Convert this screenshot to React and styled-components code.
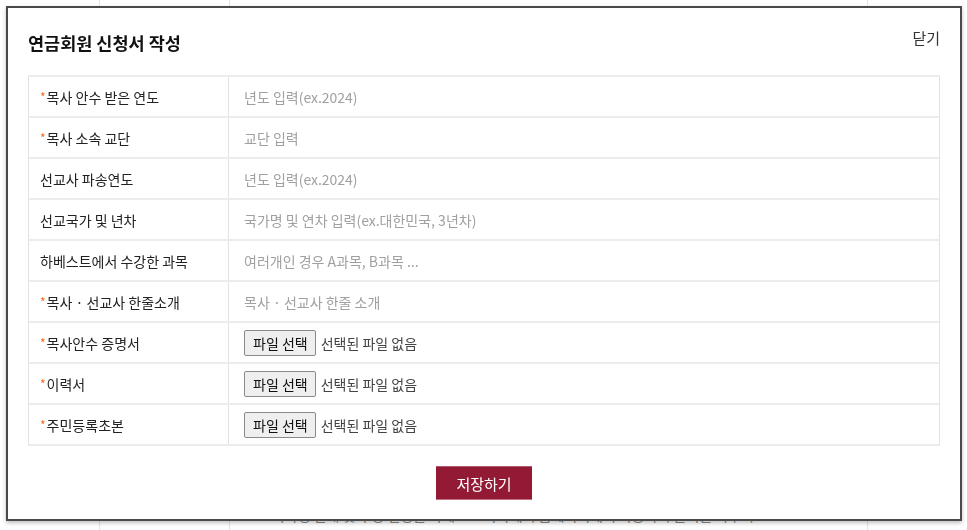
import React from "react";
import styled, { createGlobalStyle } from "styled-components";

const GlobalStyle = createGlobalStyle`
  html, body {
    margin: 0;
    padding: 0;
    background: #fff;
    font-family: "Noto Sans CJK KR", "Noto Sans", sans-serif;
    color: #222;
  }
  * { box-sizing: border-box; }
`;

const Page = styled.div`
  height: 530px;
  display: grid;
  grid-template-columns: 100px 130px 638px 1fr;
  overflow: hidden;
`;

const PageCol = styled.div`
  border-right: ${(p) => (p.$last ? "none" : "1px solid #e3e3e3")};
  display: flex;
  flex-direction: column;
  justify-content: flex-end;
  padding: 0 0 0 29px;
  font-size: 14px;
  color: #888;
  white-space: nowrap;
  overflow: hidden;
`;

const PageText = styled.div`
  line-height: 20px;
  margin-bottom: 5px;
`;

const Modal = styled.div`
  position: fixed;
  left: 6px;
  top: 6px;
  width: 956px;
  height: 515px;
  background: #fff;
  border: 2px solid #4a4a4a;
  box-shadow: 0 2px 4px rgba(0, 0, 0, 0.25);
  padding: 0 20px;
  display: flex;
  flex-direction: column;
`;

const Header = styled.div`
  display: flex;
  justify-content: space-between;
  align-items: flex-start;
  padding-top: 22px;
`;

const Title = styled.h2`
  margin: 0;
  font-size: 17.5px;
  line-height: 26px;
  font-weight: 700;
  color: #111;
`;

const Close = styled.button`
  border: none;
  background: none;
  padding: 0;
  margin-top: -3px;
  font-family: inherit;
  font-size: 15px;
  line-height: 22px;
  color: #333;
  cursor: pointer;
`;

const Table = styled.div`
  margin-top: 19px;
  border: 1px solid #e2e2e2;
  border-top: 2px solid #ececec;
  border-bottom: none;
`;

const Row = styled.div`
  display: grid;
  grid-template-columns: 200px 1fr;
  height: 41px;
  border-bottom: 2px solid #ececec;
`;

const Label = styled.div`
  display: flex;
  align-items: center;
  padding-left: 11px;
  border-right: 1px solid #e2e2e2;
  font-size: 14px;
  color: #222;
`;

const Star = styled.span`
  color: #f26b1d;
  font-size: 12px;
  margin-right: 1px;
`;

const Cell = styled.div`
  display: flex;
  align-items: center;
  padding-left: 15px;
`;

const TextInput = styled.input`
  border: none;
  outline: none;
  width: 100%;
  padding: 0;
  font-family: inherit;
  font-size: 14px;
  color: #333;
  background: transparent;
  &::placeholder {
    color: #a0a0a0;
  }
`;

const FileButton = styled.span`
  display: inline-flex;
  align-items: center;
  height: 26px;
  padding: 0 7px 0 8px;
  border: 1px solid #8a8a8a;
  border-radius: 2px;
  background: #efefef;
  font-size: 14px;
  color: #111;
  cursor: pointer;
`;

const FileName = styled.span`
  margin-left: 5px;
  font-size: 14px;
  color: #444;
`;

const Footer = styled.div`
  display: flex;
  justify-content: center;
  padding-top: 20px;
`;

const SaveButton = styled.button`
  width: 96px;
  height: 34px;
  border: none;
  border-top: 1px solid #b5566b;
  border-bottom: 1px solid #c07080;
  background: #931a35;
  color: #fff;
  font-family: inherit;
  font-size: 15px;
  cursor: pointer;
`;

const fields = [
  { label: "목사 안수 받은 연도", required: true, placeholder: "년도 입력(ex.2024)" },
  { label: "목사 소속 교단", required: true, placeholder: "교단 입력" },
  { label: "선교사 파송연도", placeholder: "년도 입력(ex.2024)" },
  { label: "선교국가 및 년차", placeholder: "국가명 및 연차 입력(ex.대한민국, 3년차)" },
  { label: "하베스트에서 수강한 과목", placeholder: "여러개인 경우 A과목, B과목 ..." },
  { label: "목사 · 선교사 한줄소개", required: true, placeholder: "목사 · 선교사 한줄 소개" },
  { label: "목사안수 증명서", required: true, file: true },
  { label: "이력서", required: true, file: true },
  { label: "주민등록초본", required: true, file: true },
];

const App = () => {
  return (
    <>
      <GlobalStyle />
      <Page>
        <PageCol />
        <PageCol />
        <PageCol>
          <PageText>
            교육과정 안내 및 수강 신청은 하베스트 아카데미 홈페이지에서 가능하며 문의는 사무국으로
          </PageText>
        </PageCol>
        <PageCol $last />
      </Page>
      <Modal>
        <Header>
          <Title>연금회원 신청서 작성</Title>
          <Close>닫기</Close>
        </Header>
        <Table>
          {fields.map((f) => (
            <Row key={f.label}>
              <Label>
                {f.required && <Star>*</Star>}
                {f.label}
              </Label>
              <Cell>
                {f.file ? (
                  <>
                    <FileButton>파일 선택</FileButton>
                    <FileName>선택된 파일 없음</FileName>
                  </>
                ) : (
                  <TextInput placeholder={f.placeholder} />
                )}
              </Cell>
            </Row>
          ))}
        </Table>
        <Footer>
          <SaveButton>저장하기</SaveButton>
        </Footer>
      </Modal>
    </>
  );
};

export default App;
